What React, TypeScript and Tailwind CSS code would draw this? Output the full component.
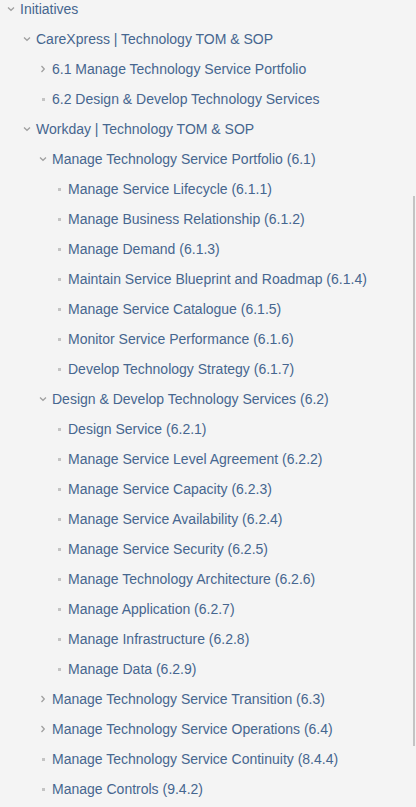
type Node = { label: string; kind: "open" | "closed" | "leaf"; level: number };

const rows: Node[] = [
	{ label: "Initiatives", kind: "open", level: 0 },
	{ label: "CareXpress | Technology TOM & SOP", kind: "open", level: 1 },
	{ label: "6.1 Manage Technology Service Portfolio", kind: "closed", level: 2 },
	{ label: "6.2 Design & Develop Technology Services", kind: "leaf", level: 2 },
	{ label: "Workday | Technology TOM & SOP", kind: "open", level: 1 },
	{ label: "Manage Technology Service Portfolio (6.1)", kind: "open", level: 2 },
	{ label: "Manage Service Lifecycle (6.1.1)", kind: "leaf", level: 3 },
	{ label: "Manage Business Relationship (6.1.2)", kind: "leaf", level: 3 },
	{ label: "Manage Demand (6.1.3)", kind: "leaf", level: 3 },
	{ label: "Maintain Service Blueprint and Roadmap (6.1.4)", kind: "leaf", level: 3 },
	{ label: "Manage Service Catalogue (6.1.5)", kind: "leaf", level: 3 },
	{ label: "Monitor Service Performance (6.1.6)", kind: "leaf", level: 3 },
	{ label: "Develop Technology Strategy (6.1.7)", kind: "leaf", level: 3 },
	{ label: "Design & Develop Technology Services (6.2)", kind: "open", level: 2 },
	{ label: "Design Service (6.2.1)", kind: "leaf", level: 3 },
	{ label: "Manage Service Level Agreement (6.2.2)", kind: "leaf", level: 3 },
	{ label: "Manage Service Capacity (6.2.3)", kind: "leaf", level: 3 },
	{ label: "Manage Service Availability (6.2.4)", kind: "leaf", level: 3 },
	{ label: "Manage Service Security (6.2.5)", kind: "leaf", level: 3 },
	{ label: "Manage Technology Architecture (6.2.6)", kind: "leaf", level: 3 },
	{ label: "Manage Application (6.2.7)", kind: "leaf", level: 3 },
	{ label: "Manage Infrastructure (6.2.8)", kind: "leaf", level: 3 },
	{ label: "Manage Data (6.2.9)", kind: "leaf", level: 3 },
	{ label: "Manage Technology Service Transition (6.3)", kind: "closed", level: 2 },
	{ label: "Manage Technology Service Operations (6.4)", kind: "closed", level: 2 },
	{ label: "Manage Technology Service Continuity (8.4.4)", kind: "leaf", level: 2 },
	{ label: "Manage Controls (9.4.2)", kind: "leaf", level: 2 },
];

const indent = ["pl-[2px]", "pl-[18px]", "pl-[34px]", "pl-[50px]"];

function Marker({ kind }: { kind: Node["kind"] }) {
	if (kind === "leaf") {
		return (
			<span className="w-[18px] flex items-center justify-center">
				<span className="w-[3px] h-[3px] bg-[#c4c4c4]" />
			</span>
		);
	}
	return (
		<span className="w-[18px] flex items-center justify-center">
			<svg width="10" height="10" viewBox="0 0 10 10" className={kind === "closed" ? "-rotate-90" : ""}>
				<path d="M2 3.5 L5 6.3 L8 3.5" fill="none" stroke="#a0a0a0" strokeWidth="1.3" />
			</svg>
		</span>
	);
}

export default function App() {
	return (
		<div className="relative w-[416px] h-[807px] overflow-hidden bg-[#f4f4f4] font-['Liberation_Sans',Arial,sans-serif]">
			<ul className="-mt-[6px]">
				{rows.map((r, i) => (
					<li key={i} className={`h-[30px] flex items-center ${indent[r.level]}`}>
						<Marker kind={r.kind} />
						<span className="text-[14px] text-[#46668f] whitespace-nowrap">{r.label}</span>
					</li>
				))}
			</ul>
			<div className="absolute right-[1px] top-[196px] w-[2px] h-[550px] bg-[#c4c4c4]" />
		</div>
	);
}
